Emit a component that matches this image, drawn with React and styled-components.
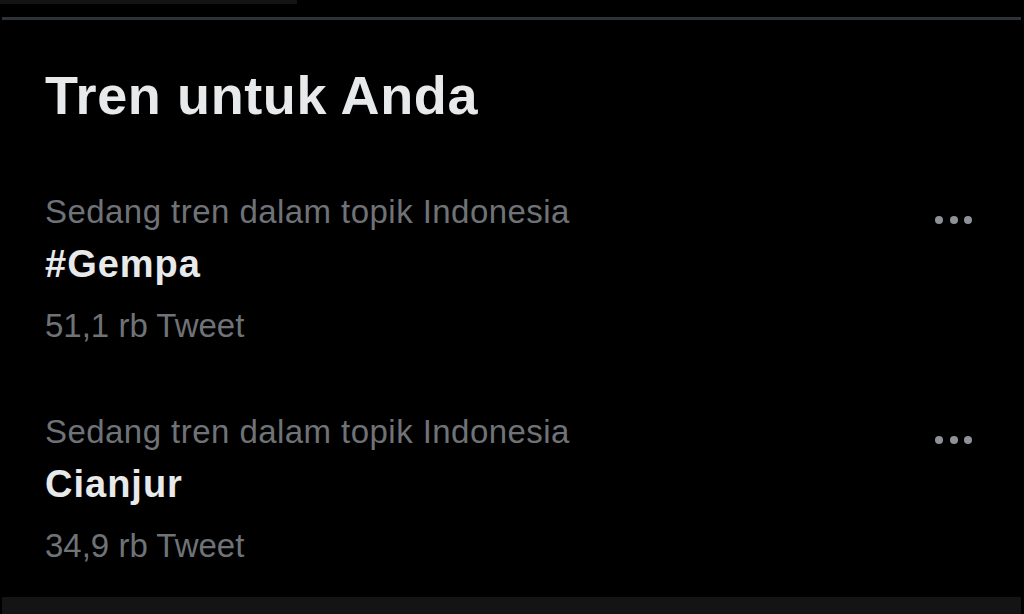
import styled, { createGlobalStyle } from "styled-components";

const GlobalStyle = createGlobalStyle`
  html, body {
    margin: 0;
    padding: 0;
    background: #000;
  }
  body {
    font-family: "Liberation Sans", Arial, sans-serif;
    overflow: hidden;
  }
`;

const trends = [
  { context: "Sedang tren dalam topik Indonesia", name: "#Gempa", count: "51,1 rb Tweet" },
  { context: "Sedang tren dalam topik Indonesia", name: "Cianjur", count: "34,9 rb Tweet" },
];

const App = () => {
  return (
    <>
      <GlobalStyle />
      <Page>
        <TopStrip />
        <Divider />
        <Panel>
          <Title>Tren untuk Anda</Title>
          <List>
            {trends.map((t) => (
              <Item key={t.name}>
                <Info>
                  <Context>{t.context}</Context>
                  <Name>{t.name}</Name>
                  <Count>{t.count}</Count>
                </Info>
                <More aria-label="Lainnya">
                  <Dot />
                  <Dot />
                  <Dot />
                </More>
              </Item>
            ))}
          </List>
        </Panel>
        <BottomBar />
      </Page>
    </>
  );
};

const Page = styled.div`
  width: 1024px;
  height: 614px;
  background: #000;
  display: flex;
  flex-direction: column;
`;

const TopStrip = styled.div`
  width: 297px;
  height: 4px;
  background: #141414;
`;

const Divider = styled.div`
  height: 3px;
  margin: 13px 3px 0 2px;
  background: #2f3236;
`;

const Panel = styled.div`
  padding: 48px 52px 0 45px;
  display: flex;
  flex-direction: column;
`;

const Title = styled.h2`
  margin: 0;
  font-size: 54px;
  line-height: 54px;
  font-weight: 700;
  letter-spacing: 0.6px;
  color: #e7e9ea;
`;

const List = styled.div`
  margin-top: 70px;
  display: flex;
  flex-direction: column;
  gap: 66px;
`;

const Item = styled.div`
  display: flex;
  justify-content: space-between;
  align-items: flex-start;
`;

const Info = styled.div`
  display: flex;
  flex-direction: column;
`;

const Context = styled.span`
  font-size: 33px;
  line-height: 40px;
  letter-spacing: 0.45px;
  color: #6f7377;
`;

const Name = styled.span`
  margin-top: 10px;
  font-size: 38px;
  line-height: 44px;
  font-weight: 700;
  letter-spacing: 1px;
  color: #e7e9ea;
`;

const Count = styled.span`
  margin-top: 20px;
  font-size: 33px;
  line-height: 40px;
  color: #6f7377;
`;

const More = styled.div`
  margin-top: 24px;
  display: flex;
  gap: 6.5px;
`;

const Dot = styled.span`
  width: 8px;
  height: 8px;
  border-radius: 50%;
  background: #8e9196;
`;

const BottomBar = styled.div`
  margin: 31px 3px 0 2px;
  height: 17px;
  background: #141414;
`;

export default App;
